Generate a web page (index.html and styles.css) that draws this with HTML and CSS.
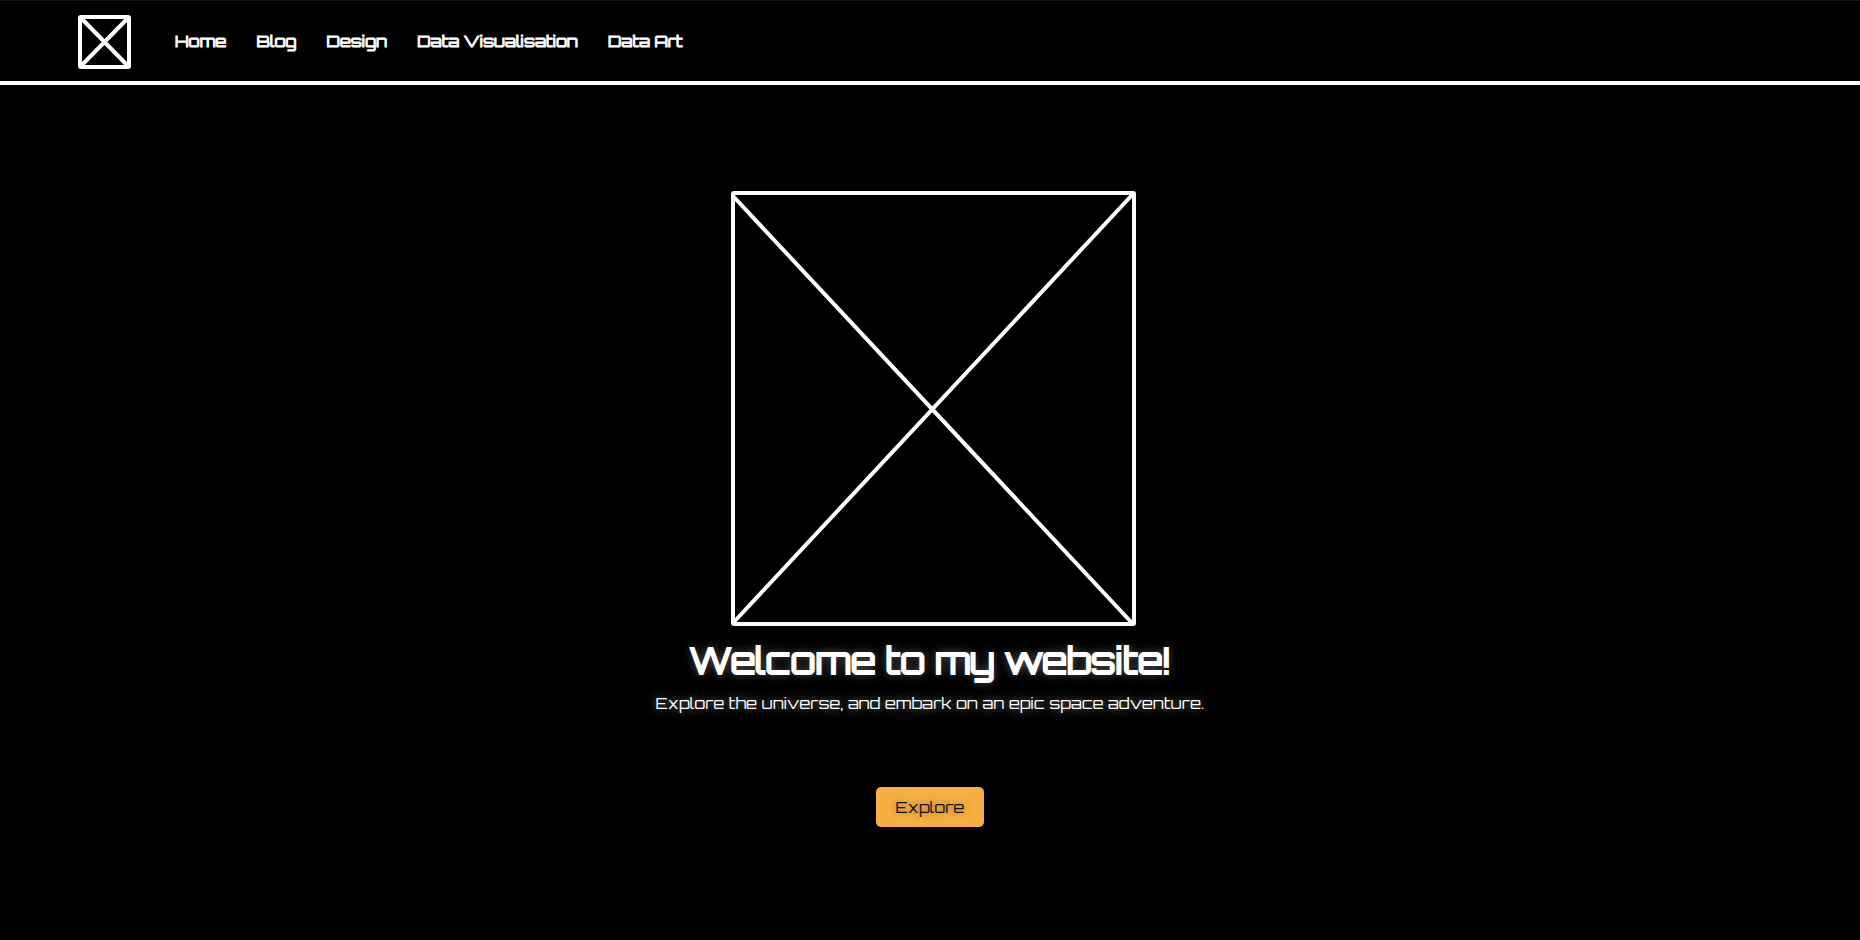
FILE: index.html
```html
<!DOCTYPE html>
<html lang="en">
<head>
<meta charset="utf-8">
<meta name="viewport" content="width=device-width, initial-scale=1">
<title>Welcome to my website!</title>
<link rel="stylesheet" href="styles.css">
</head>
<body>
<header class="navbar">
  <a class="logo" href="#" aria-label="Homepage">
    <svg class="logo-mark" viewBox="0 0 53 54" aria-hidden="true">
      <rect x="2" y="2" width="49" height="50" rx="1"/>
      <path d="M3 3L50 51M50 3L3 51"/>
    </svg>
  </a>
  <nav class="nav-links">
    <a href="#">Home</a>
    <a href="#">Blog</a>
    <a href="#">Design</a>
    <a href="#">Data Visualisation</a>
    <a href="#">Data Art</a>
  </nav>
</header>
<main class="hero">
  <svg class="hero-image" viewBox="0 0 405 435" aria-hidden="true">
    <rect x="2" y="2" width="401" height="431" rx="1"/>
    <path d="M1 4L401 432M402 3L2 432"/>
  </svg>
  <h1 class="title">Welcome to my website!</h1>
  <p class="tagline">Explore the universe, and embark on an epic space adventure.</p>
  <button class="explore" type="button">Explore</button>
</main>
</body>
</html>
```
FILE: styles.css
```css
* {
  box-sizing: border-box;
}

body {
  margin: 0;
  background: #000;
  color: #fff;
  font-family: Orbitron, Inter, sans-serif;
  font-size: 16px;
}

.navbar {
  display: flex;
  align-items: center;
  gap: 44px;
  padding: 14px 78px 12px;
  border-top: 1px solid #141414;
  border-bottom: 4px solid #fff;
}

.logo {
  display: flex;
}

.logo-mark {
  width: 53px;
  height: 54px;
  fill: none;
  stroke: #fff;
  stroke-width: 4;
}

.nav-links {
  display: flex;
  gap: 30px;
  padding-bottom: 2px;
}

.nav-links a {
  color: #fff;
  font-weight: 400;
  line-height: 24px;
  text-decoration: none;
  -webkit-text-stroke: 1px #fff;
}

.hero {
  display: flex;
  flex-direction: column;
  align-items: center;
  padding: 106px 24px 80px;
  text-align: center;
  text-shadow: 0 0 10px rgba(255, 255, 255, 0.5);
}

.hero-image {
  width: 405px;
  height: 435px;
  margin-left: 6px;
  fill: none;
  stroke: #fff;
  stroke-width: 4;
}

.title {
  margin: 11px 0 0;
  font-size: 36px;
  font-weight: 400;
  line-height: 48px;
  -webkit-text-stroke: 2px #fff;
}

.tagline {
  margin: 6px 0 0;
  line-height: 24px;
}

.explore {
  margin-top: 72px;
  padding: 8px 20px;
  border: 0;
  border-radius: 5px;
  background: #f5b041;
  color: #111;
  font: inherit;
  line-height: 24px;
  text-shadow: 0 0 8px rgba(0, 0, 0, 0.4);
  cursor: pointer;
}
```
